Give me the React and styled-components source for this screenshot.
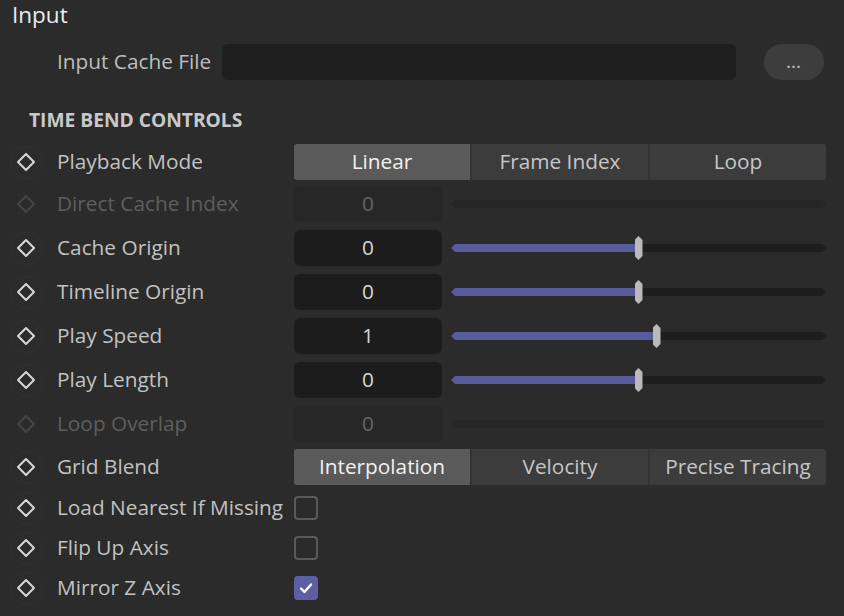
import styled, { createGlobalStyle } from "styled-components";

const GlobalStyle = createGlobalStyle`
  html, body {
    margin: 0;
    padding: 0;
    background: #2b2b2b;
  }
  body {
    font-family: "Open Sans", "Noto Sans", sans-serif;
  }
`;

const Panel = styled.div`
  width: 844px;
  height: 616px;
  background: #2b2b2b;
  color: #c4c4c4;
  overflow: hidden;
  box-sizing: border-box;
`;

const Title = styled.div`
  height: 32px;
  line-height: 30px;
  padding-left: 12px;
  font-size: 22.5px;
  color: #ececec;
`;

const FileRow = styled.div`
  display: flex;
  align-items: center;
  height: 36px;
  margin-top: 12px;
  padding: 0 20px 0 57px;
`;

const FileLabel = styled.div`
  width: 165px;
  font-size: 20.8px;
  padding-bottom: 2px;
  white-space: nowrap;
  color: #bdbdbd;
`;

const FileField = styled.div`
  flex: 1;
  height: 36px;
  border-radius: 6px;
  background: #1e1e1e;
`;

const BrowseButton = styled.div`
  width: 60px;
  height: 36px;
  margin-left: 28px;
  border-radius: 18px;
  background: #3d3d3d;
  color: #bcbcbc;
  font-size: 14px;
  font-weight: bold;
  display: flex;
  align-items: center;
  justify-content: center;
  letter-spacing: 1px;
`;

const SectionHeader = styled.div`
  height: 42px;
  margin-top: 20px;
  line-height: 40px;
  padding-left: 29px;
  font-size: 19.2px;
  font-weight: 700;
  color: #c9c9c9;
`;

const Row = styled.div`
  display: grid;
  grid-template-columns: 52px 242px 1fr;
  align-items: center;
  height: ${(p) => p.$h}px;
  padding-right: 18px;
`;

const KeyCell = styled.div`
  display: flex;
  align-items: center;
  justify-content: center;
`;

const KeyRing = styled.div`
  width: 31px;
  height: 31px;
  border-radius: 50%;
  border: 1px solid ${(p) => (p.$off ? "transparent" : "#313131")};
  display: flex;
  align-items: center;
  justify-content: center;
`;

const Label = styled.div`
  padding: 0 0 2px 5px;
  font-size: 20.8px;
  white-space: nowrap;
  color: ${(p) => (p.$off ? "#5e5e5e" : "#c2c2c2")};
`;

const Segments = styled.div`
  display: flex;
  gap: 2px;
  height: 36px;
  border-radius: 3px;
  overflow: hidden;
  background: #333;
`;

const Segment = styled.div`
  flex: 1;
  display: flex;
  align-items: center;
  justify-content: center;
  padding-bottom: 2px;
  font-size: 20.8px;
  background: ${(p) => (p.$active ? "#5a5a5a" : "#3c3c3c")};
  color: ${(p) => (p.$active ? "#f2f2f2" : "#c6c6c6")};
`;

const NumberControl = styled.div`
  display: flex;
  align-items: center;
`;

const NumberField = styled.div`
  width: 148px;
  height: 36px;
  box-sizing: border-box;
  padding-bottom: 2px;
  border-radius: 6px;
  display: flex;
  align-items: center;
  justify-content: center;
  font-size: 20.8px;
  background: ${(p) => (p.$off ? "#272727" : "#1c1c1c")};
  color: ${(p) => (p.$off ? "#656565" : "#d6d6d6")};
`;

const SliderWrap = styled.div`
  position: relative;
  flex: 1;
  height: 26px;
  margin-left: 9px;
  display: flex;
  align-items: center;
`;

const Track = styled.div`
  position: relative;
  width: 100%;
  height: 8px;
  background: ${(p) => (p.$off ? "#262626" : "#1d1d1d")};
  clip-path: polygon(4px 0, calc(100% - 4px) 0, 100% 50%, calc(100% - 4px) 100%, 4px 100%, 0 50%);
`;

const Fill = styled.div`
  height: 100%;
  background: #575c9c;
`;

const Handle = styled.div`
  position: absolute;
  top: 1px;
  width: 8px;
  height: 24px;
  margin-left: -4px;
  background: #bababa;
  clip-path: polygon(50% 0, 100% 4px, 100% calc(100% - 4px), 50% 100%, 0 calc(100% - 4px), 0 4px);
`;

const CheckBox = styled.div`
  width: 24px;
  height: 24px;
  box-sizing: border-box;
  border-radius: 4px;
  border: 2px solid ${(p) => (p.$checked ? "#5c5fa6" : "#5a5a5a")};
  background: ${(p) => (p.$checked ? "#5c5fa6" : "transparent")};
  display: flex;
  align-items: center;
  justify-content: center;
`;

const Diamond = ({ off }) => (
  <svg width="20" height="20" viewBox="0 0 20 20">
    <path
      d="M10 2 L18 10 L10 18 L2 10 Z"
      fill="none"
      stroke={off ? "#454545" : "#d8d8d8"}
      strokeWidth="2"
      strokeLinejoin="round"
    />
  </svg>
);

const Key = ({ off }) => (
  <KeyCell>
    <KeyRing $off={off}>
      <Diamond off={off} />
    </KeyRing>
  </KeyCell>
);

const SegRow = ({ label, options, active, h }) => (
  <Row $h={h}>
    <Key />
    <Label>{label}</Label>
    <Segments>
      {options.map((o) => (
        <Segment key={o} $active={o === active}>
          {o}
        </Segment>
      ))}
    </Segments>
  </Row>
);

const NumRow = ({ label, value, pos, off }) => (
  <Row $h={44}>
    <Key off={off} />
    <Label $off={off}>{label}</Label>
    <NumberControl>
      <NumberField $off={off}>{value}</NumberField>
      <SliderWrap>
        <Track $off={off}>{!off && <Fill style={{ width: `${pos}%` }} />}</Track>
        {!off && <Handle style={{ left: `${pos}%` }} />}
      </SliderWrap>
    </NumberControl>
  </Row>
);

const CheckRow = ({ label, checked }) => (
  <Row $h={40}>
    <Key />
    <Label>{label}</Label>
    <CheckBox $checked={checked}>
      {checked && (
        <svg width="16" height="16" viewBox="0 0 16 16">
          <path d="M3 8.5 L6.5 12 L13 4.5" fill="none" stroke="#fff" strokeWidth="2.4" strokeLinecap="round" strokeLinejoin="round" />
        </svg>
      )}
    </CheckBox>
  </Row>
);

export default function App() {
  return (
    <Panel>
      <GlobalStyle />
      <Title>Input</Title>
      <FileRow>
        <FileLabel>Input Cache File</FileLabel>
        <FileField />
        <BrowseButton>...</BrowseButton>
      </FileRow>
      <SectionHeader>TIME BEND CONTROLS</SectionHeader>
      <SegRow label="Playback Mode" options={["Linear", "Frame Index", "Loop"]} active="Linear" h={40} />
      <NumRow label="Direct Cache Index" value="0" off />
      <NumRow label="Cache Origin" value="0" pos={50} />
      <NumRow label="Timeline Origin" value="0" pos={50} />
      <NumRow label="Play Speed" value="1" pos={54.8} />
      <NumRow label="Play Length" value="0" pos={50} />
      <NumRow label="Loop Overlap" value="0" off />
      <SegRow label="Grid Blend" options={["Interpolation", "Velocity", "Precise Tracing"]} active="Interpolation" h={42} />
      <CheckRow label="Load Nearest If Missing" />
      <CheckRow label="Flip Up Axis" />
      <CheckRow label="Mirror Z Axis" checked />
    </Panel>
  );
}
